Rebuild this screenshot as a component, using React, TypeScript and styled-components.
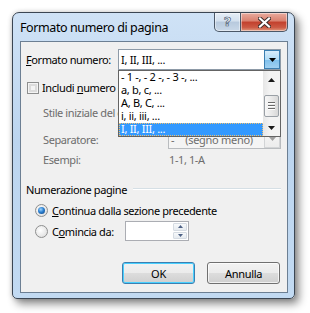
import React from "react";
import styled, { createGlobalStyle } from "styled-components";

const Global = createGlobalStyle`
  html, body { margin: 0; padding: 0; background: #ffffff; }
  body {
    width: 310px; height: 313px; overflow: hidden;
    font-family: "Noto Sans", "Open Sans", sans-serif;
    font-size: 11px; color: #000;
  }
  * { box-sizing: border-box; }
`;

const Page = styled.div`
  padding: 12px 0 0 12px;
`;

const Window = styled.div`
  width: 283px;
  height: 287px;
  border: 1px solid #3b4653;
  border-radius: 7px 7px 5px 5px;
  background: linear-gradient(180deg, #cfe2f6 0%, #bcd5ef 45%, #c2daf2 100%);
  box-shadow: 4px 5px 9px rgba(0, 0, 0, 0.45), 0 0 5px rgba(0, 0, 0, 0.18);
  display: flex;
  flex-direction: column;
  padding: 0 6px 5px 7px;
`;

const TitleBar = styled.div`
  height: 28px;
  display: flex;
  align-items: center;
`;

const Title = styled.div`
  flex: 1;
  font-size: 12.5px;
  letter-spacing: -0.4px;
  color: #000;
  padding-top: 1px;
`;

const Caption = styled.div`
  align-self: flex-start;
  display: flex;
  height: 19px;
`;

const CapBtn = styled.div<{ $kind: "help" | "close" }>`
  width: ${(p) => (p.$kind === "help" ? 27 : 47)}px;
  height: 19px;
  border: 1px solid #4b5868;
  border-top: none;
  border-left: ${(p) => (p.$kind === "help" ? "1px solid #4b5868" : "none")};
  border-radius: ${(p) => (p.$kind === "help" ? "0 0 0 5px" : "0 0 5px 0")};
  background: ${(p) =>
    p.$kind === "help"
      ? "linear-gradient(180deg, #e6eef7 0%, #d3e0ee 45%, #b7c9dd 50%, #c9d8e8 100%)"
      : "linear-gradient(180deg, #e9ab9e 0%, #d9806e 45%, #c2402d 50%, #cc5a44 80%, #e09a7f 100%)"};
  box-shadow: inset 0 0 0 1px rgba(255, 255, 255, 0.45);
  display: flex;
  align-items: center;
  justify-content: center;
`;

const HelpGlyph = styled.span`
  font-family: "DejaVu Sans", sans-serif;
  font-weight: bold;
  font-size: 13px;
  line-height: 1;
  color: #f4f7fb;
  -webkit-text-stroke: 0.7px #4f6075;
  margin-top: -1px;
`;

const Client = styled.div`
  flex: 1;
  position: relative;
  border: 1px solid #6c7f93;
  background: #f0f0f0;
  padding: 7px 6px 7px 5px;
  display: flex;
  flex-direction: column;
`;

const Row = styled.div<{ $top: number; $h: number; $indent?: number }>`
  display: flex;
  align-items: center;
  margin-top: ${(p) => p.$top}px;
  height: ${(p) => p.$h}px;
  padding-left: ${(p) => p.$indent ?? 0}px;
`;

const Label = styled.div<{ $w?: number; $disabled?: boolean }>`
  width: ${(p) => (p.$w ? `${p.$w}px` : "auto")};
  flex-shrink: 0;
  white-space: nowrap;
  letter-spacing: -0.4px;
  color: ${(p) => (p.$disabled ? "#6d6d6d" : "#000")};
`;

/* label whose end is hidden behind the open drop-down list */
const Covered = styled.div<{ $w: number; $disabled?: boolean }>`
  width: ${(p) => p.$w}px;
  flex-shrink: 0;
  overflow: hidden;
  white-space: nowrap;
  letter-spacing: -0.4px;
  color: ${(p) => (p.$disabled ? "#6d6d6d" : "#000")};
`;

const U = styled.span`
  text-decoration: underline;
  text-underline-offset: 1px;
`;

const Combo = styled.div<{ $w: number; $disabled?: boolean }>`
  position: relative;
  width: ${(p) => p.$w}px;
  height: ${(p) => (p.$disabled ? 20 : 21)}px;
  border: 1px solid ${(p) => (p.$disabled ? "#b9bcbf" : "#8d9aa7")};
  background: ${(p) => (p.$disabled ? "#f4f4f4" : "#fff")};
  display: flex;
  align-items: center;
  flex-shrink: 0;
`;

const ComboText = styled.div<{ $disabled?: boolean }>`
  flex: 1;
  padding-left: 2px;
  letter-spacing: -0.3px;
  white-space: nowrap;
  overflow: hidden;
  color: ${(p) => (p.$disabled ? "#6d6d6d" : "#000")};
  display: flex;
  gap: 11px;
`;

const DropBtn = styled.div<{ $active?: boolean }>`
  width: 16px;
  height: 100%;
  display: flex;
  align-items: center;
  justify-content: center;
  border: 1px solid ${(p) => (p.$active ? "#3c7fb1" : "#d2d4d6")};
  background: ${(p) =>
    p.$active
      ? "linear-gradient(180deg, #d8edfb 0%, #b2dcf6 50%, #7fc0ec 51%, #9fd0f1 100%)"
      : "linear-gradient(180deg, #f6f6f6 0%, #ececec 100%)"};
`;

const List = styled.div`
  position: absolute;
  left: -1px;
  top: 20px;
  width: 163px;
  height: 67px;
  border: 1px solid #646464;
  background: #fff;
  display: flex;
  z-index: 5;
`;

const Items = styled.div`
  width: 144px;
  display: flex;
  flex-direction: column;
`;

const Item = styled.div<{ $sel?: boolean }>`
  height: 13px;
  line-height: 12px;
  padding-left: 2px;
  letter-spacing: -0.3px;
  white-space: nowrap;
  color: ${(p) => (p.$sel ? "#fff" : "#000")};
  background: ${(p) => (p.$sel ? "#3399ff" : "transparent")};
  outline: ${(p) => (p.$sel ? "1px dotted #f0c070" : "none")};
  outline-offset: -1px;
`;

const ScrollBar = styled.div`
  width: 17px;
  display: flex;
  flex-direction: column;
  background: linear-gradient(90deg, #e6e6e6 0%, #f3f3f3 40%, #f3f3f3 100%);
`;

const Arrow = styled.div`
  height: 17px;
  display: flex;
  align-items: center;
  justify-content: center;
`;

const Track = styled.div`
  flex: 1;
  display: flex;
  flex-direction: column;
  align-items: center;
`;

const Thumb = styled.div`
  margin-top: 7px;
  width: 15px;
  height: 22px;
  border: 1px solid #9aa0a6;
  border-radius: 2px;
  background: linear-gradient(90deg, #f7f7f7 0%, #e9e9e9 50%, #d8d8d8 100%);
  display: flex;
  flex-direction: column;
  align-items: center;
  justify-content: center;
  gap: 1px;
`;

const Grip = styled.div`
  width: 7px;
  height: 1px;
  background: #6a6a6a;
  box-shadow: 0 1px 0 #ffffff;
  margin-bottom: 1px;
`;

const Check = styled.div`
  width: 12px;
  height: 12px;
  margin-left: 1px;
  border: 1px solid #8e8f8f;
  background: #f4f4f4;
  box-shadow: inset 0 0 0 1px #f4f4f4, inset 0 0 0 3px #dcdcdc;
  flex-shrink: 0;
  margin-right: 3px;
`;

const GroupHead = styled.div`
  display: flex;
  align-items: center;
  margin-top: 13px;
  height: 16px;
`;

const GroupLine = styled.div`
  flex: 1;
  margin-left: 6px;
  height: 2px;
  border-top: 1px solid #d5dfe5;
  border-bottom: 1px solid #ffffff;
`;

const Radio = styled.div<{ $on?: boolean }>`
  width: 13px;
  height: 13px;
  border-radius: 50%;
  border: 1px solid #8e8f8f;
  background: radial-gradient(circle at 40% 40%, #ffffff 0%, #e8e8e8 60%, #d6d6d6 100%);
  display: flex;
  align-items: center;
  justify-content: center;
  flex-shrink: 0;
  margin-right: 4px;
  &::after {
    content: "";
    display: ${(p) => (p.$on ? "block" : "none")};
    width: 7px;
    height: 7px;
    border-radius: 50%;
    background: radial-gradient(circle at 40% 35%, #9fd5ff 0%, #2b7fd0 45%, #0d3e78 100%);
  }
`;

const RadioLabel = styled.div`
  display: flex;
  align-items: center;
  width: 90px;
  flex-shrink: 0;
`;

const Spin = styled.div`
  width: 64px;
  height: 20px;
  border: 1px solid #abadb3;
  background: #fff;
  display: flex;
  justify-content: flex-end;
  padding: 1px;
`;

const SpinBtns = styled.div`
  width: 14px;
  display: flex;
  flex-direction: column;
  gap: 1px;
`;

const SpinBtn = styled.div`
  flex: 1;
  border: 1px solid #d5dbe2;
  border-radius: 1px;
  background: linear-gradient(180deg, #f7f9fb 0%, #e6ebf0 100%);
  display: flex;
  align-items: center;
  justify-content: center;
`;

const Buttons = styled.div`
  display: flex;
  justify-content: flex-end;
  gap: 12px;
  margin-top: 21px;
  padding-right: 1px;
`;

const Button = styled.div<{ $def?: boolean }>`
  width: 73px;
  height: 22px;
  border: 1px solid ${(p) => (p.$def ? "#3c7fb1" : "#707070")};
  border-radius: 3px;
  background: linear-gradient(180deg, #f2f2f2 0%, #ebebeb 49%, #dddddd 50%, #cfcfcf 100%);
  box-shadow: inset 0 0 0 1px ${(p) => (p.$def ? "#48d0ff" : "rgba(255,255,255,0.7)")};
  display: flex;
  align-items: center;
  justify-content: center;
  letter-spacing: -0.3px;
`;

const Tri = ({ dir, color, w = 7, h = 4 }: { dir: "up" | "down"; color: string; w?: number; h?: number }) => (
  <svg width={w} height={h} viewBox={`0 0 ${w} ${h}`}>
    {dir === "down" ? (
      <polygon points={`0,0 ${w},0 ${w / 2},${h}`} fill={color} />
    ) : (
      <polygon points={`0,${h} ${w},${h} ${w / 2},0`} fill={color} />
    )}
  </svg>
);

export default function App() {
  return (
    <>
      <Global />
      <Page>
        <Window>
          <TitleBar>
            <Title>Formato numero di pagina</Title>
            <Caption>
              <CapBtn $kind="help">
                <HelpGlyph>?</HelpGlyph>
              </CapBtn>
              <CapBtn $kind="close">
                <svg width="13" height="11" viewBox="0 0 13 11">
                  <path d="M2 1.5 L11 9.5 M11 1.5 L2 9.5" stroke="#3a2a28" strokeWidth="4" strokeLinecap="square" />
                  <path d="M2 1.5 L11 9.5 M11 1.5 L2 9.5" stroke="#ffffff" strokeWidth="2.2" strokeLinecap="square" />
                </svg>
              </CapBtn>
            </Caption>
          </TitleBar>
          <Client>
            <Row $top={0} $h={21}>
              <Label $w={92}>
                <U>F</U>ormato numero:
              </Label>
              <Combo $w={163}>
                <ComboText>I, II, III, ...</ComboText>
                <DropBtn $active>
                  <Tri dir="down" color="#000" />
                </DropBtn>
                <List>
                  <Items>
                    <Item>- 1 -, - 2 -, - 3 -, ...</Item>
                    <Item>a, b, c, ...</Item>
                    <Item>A, B, C, ...</Item>
                    <Item>i, ii, iii, ...</Item>
                    <Item $sel>I, II, III, ...</Item>
                  </Items>
                  <ScrollBar>
                    <Arrow>
                      <Tri dir="up" color="#1a1a1a" />
                    </Arrow>
                    <Track>
                      <Thumb>
                        <Grip />
                        <Grip />
                        <Grip />
                      </Thumb>
                    </Track>
                    <Arrow>
                      <Tri dir="down" color="#1a1a1a" />
                    </Arrow>
                  </ScrollBar>
                </List>
              </Combo>
            </Row>
            <Row $top={11} $h={13}>
              <Check />
              <Covered $w={76}>
                Includi <U>n</U>umero di capitolo
              </Covered>
            </Row>
            <Row $top={8} $h={20} $indent={17}>
              <Covered $w={75} $disabled>
                Stile iniziale del capitolo:
              </Covered>
            </Row>
            <Row $top={7} $h={20} $indent={17}>
              <Label $w={125} $disabled>
                Separatore:
              </Label>
              <Combo $w={113} $disabled>
                <ComboText $disabled>
                  <span>-</span>
                  <span>(segno meno)</span>
                </ComboText>
                <DropBtn>
                  <Tri dir="down" color="#a0a0a0" />
                </DropBtn>
              </Combo>
            </Row>
            <Row $top={1} $h={18} $indent={17}>
              <Label $w={126} $disabled>
                Esempi:
              </Label>
              <Label $disabled>1-1, 1-A</Label>
            </Row>
            <GroupHead>
              <Label>Numerazione pagine</Label>
              <GroupLine />
            </GroupHead>
            <Row $top={5} $h={16} $indent={9}>
              <Radio $on />
              <Label>
                <U>C</U>ontinua dalla sezione precedente
              </Label>
            </Row>
            <Row $top={3} $h={20} $indent={9}>
              <RadioLabel>
                <Radio />
                <Label>
                  C<U>o</U>mincia da:
                </Label>
              </RadioLabel>
              <Spin>
                <SpinBtns>
                  <SpinBtn>
                    <Tri dir="up" color="#4d6185" w={5} h={3} />
                  </SpinBtn>
                  <SpinBtn>
                    <Tri dir="down" color="#4d6185" w={5} h={3} />
                  </SpinBtn>
                </SpinBtns>
              </Spin>
            </Row>
            <Buttons>
              <Button $def>OK</Button>
              <Button>Annulla</Button>
            </Buttons>
          </Client>
        </Window>
      </Page>
    </>
  );
}
